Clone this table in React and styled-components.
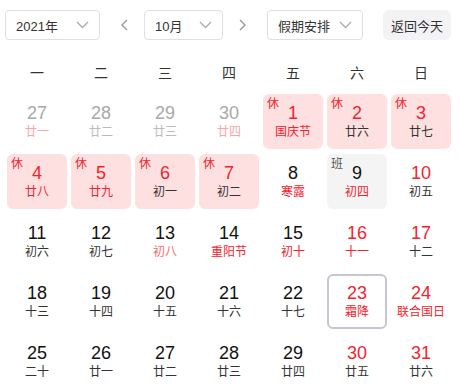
import { createGlobalStyle, styled } from 'styled-components';

const GlobalStyle = createGlobalStyle`
  body {
    margin: 0;
    background: #fff;
    font-family: "Liberation Sans", "Noto Sans CJK SC", sans-serif;
    color: #333;
  }
`;

const RED = '#f5222d';

const Wrapper = styled.div`
  padding: 10px 5px 0;
  width: 460px;
  box-sizing: border-box;
`;

const Toolbar = styled.div`
  display: flex;
  align-items: center;
  height: 30px;
`;

const Select = styled.div`
  display: flex;
  align-items: center;
  justify-content: space-between;
  box-sizing: border-box;
  width: ${(p) => p.$width}px;
  height: 30px;
  padding: 0 10px;
  border: 1px solid #dcdfe6;
  border-radius: 4px;
  font-size: 13px;
  color: #333;
`;

const ArrowBtn = styled.div`
  display: flex;
  align-items: center;
  justify-content: center;
  width: 24px;
  height: 30px;
  margin: ${(p) => p.$margin};
  color: #999;
`;

const TodayButton = styled.div`
  display: flex;
  align-items: center;
  justify-content: center;
  width: 68px;
  height: 30px;
  margin-left: 20px;
  border-radius: 6px;
  background: #f3f3f5;
  font-size: 13px;
  color: #333;
`;

const Weekdays = styled.div`
  display: grid;
  grid-template-columns: repeat(7, 60px);
  column-gap: 4px;
  padding: 0 2px;
  margin-top: 22px;
  height: 22px;
  align-items: center;
`;

const Weekday = styled.div`
  text-align: center;
  font-size: 14px;
  line-height: 22px;
  color: #333;
`;

const Grid = styled.div`
  display: grid;
  grid-template-columns: repeat(7, 60px);
  grid-auto-rows: 55px;
  column-gap: 4px;
  row-gap: 5px;
  padding: 0 2px;
  margin-top: 10px;
`;

const Cell = styled.div`
  position: relative;
  box-sizing: border-box;
  display: flex;
  flex-direction: column;
  align-items: center;
  gap: 1px;
  border-radius: 6px;
  background: ${(p) => (p.$kind === 'rest' ? '#ffe0e0' : p.$kind === 'work' ? '#f4f4f5' : 'transparent')};
  border: ${(p) => (p.$today ? '2px solid #c4c7d0' : 'none')};
  padding-top: ${(p) => (p.$today ? 7 : 9)}px;
`;

const DayNum = styled.div`
  font-size: 18px;
  line-height: 20px;
  color: ${(p) => p.$color};
`;

const Lunar = styled.div`
  font-size: 12px;
  line-height: 16px;
  white-space: nowrap;
  color: ${(p) => p.$color};
`;

const Tag = styled.span`
  position: absolute;
  left: 4px;
  top: 2px;
  font-size: 12px;
  line-height: 16px;
  color: ${(p) => (p.$work ? '#555' : RED)};
`;

const Chevron = () => (
  <svg width="13" height="8" viewBox="0 0 13 8" fill="none">
    <path d="M1 1l5.5 5.5L12 1" stroke="#a8abb2" strokeWidth="1.3" />
  </svg>
);

const Arrow = ({ dir }) => (
  <svg width="8" height="12" viewBox="0 0 8 12" fill="none">
    <path d={dir === 'left' ? 'M7 1L2 6l5 5' : 'M1 1l5 5-5 5'} stroke="#999" strokeWidth="1.4" />
  </svg>
);

const DARK = '#333';
const GRAY = '#a8a8a8';
const PINK = '#ffa3a8';
const LGRAY = '#bbb';

// [day, lunar, dayColor, lunarColor, kind, today]
const days = [
  [27, '廿一', GRAY, PINK], [28, '廿二', GRAY, LGRAY], [29, '廿三', GRAY, LGRAY], [30, '廿四', GRAY, PINK],
  [1, '国庆节', RED, RED, 'rest'], [2, '廿六', RED, DARK, 'rest'], [3, '廿七', RED, DARK, 'rest'],
  [4, '廿八', RED, RED, 'rest'], [5, '廿九', RED, RED, 'rest'], [6, '初一', RED, DARK, 'rest'], [7, '初二', RED, DARK, 'rest'],
  [8, '寒露', '#111', RED], [9, '初四', '#111', RED, 'work'], [10, '初五', RED, DARK],
  [11, '初六', '#111', DARK], [12, '初七', '#111', DARK], [13, '初八', '#111', '#f56c6c'], [14, '重阳节', '#111', RED],
  [15, '初十', '#111', RED], [16, '十一', RED, RED], [17, '十二', RED, DARK],
  [18, '十三', '#111', DARK], [19, '十四', '#111', DARK], [20, '十五', '#111', DARK], [21, '十六', '#111', DARK],
  [22, '十七', '#111', DARK], [23, '霜降', RED, RED, null, true], [24, '联合国日', RED, RED],
  [25, '二十', '#111', DARK], [26, '廿一', '#111', DARK], [27, '廿二', '#111', DARK], [28, '廿三', '#111', DARK],
  [29, '廿四', '#111', DARK], [30, '廿五', RED, DARK], [31, '廿六', RED, DARK],
];

export default function App() {
  return (
    <Wrapper>
      <GlobalStyle />
      <Toolbar>
        <Select $width={95}>
          <span>2021年</span>
          <Chevron />
        </Select>
        <ArrowBtn $margin="0 8px 0 12px">
          <Arrow dir="left" />
        </ArrowBtn>
        <Select $width={79}>
          <span>10月</span>
          <Chevron />
        </Select>
        <ArrowBtn $margin="0 12px 0 8px">
          <Arrow dir="right" />
        </ArrowBtn>
        <Select $width={96}>
          <span>假期安排</span>
          <Chevron />
        </Select>
        <TodayButton>返回今天</TodayButton>
      </Toolbar>

      <Weekdays>
        {['一', '二', '三', '四', '五', '六', '日'].map((w) => (
          <Weekday key={w}>{w}</Weekday>
        ))}
      </Weekdays>

      <Grid>
        {days.map(([d, lunar, dc, lc, kind, today], i) => (
          <Cell key={i} $kind={kind} $today={today}>
            {kind === 'rest' && <Tag>休</Tag>}
            {kind === 'work' && <Tag $work>班</Tag>}
            <DayNum $color={dc}>{d}</DayNum>
            <Lunar $color={lc}>{lunar}</Lunar>
          </Cell>
        ))}
      </Grid>
    </Wrapper>
  );
}
